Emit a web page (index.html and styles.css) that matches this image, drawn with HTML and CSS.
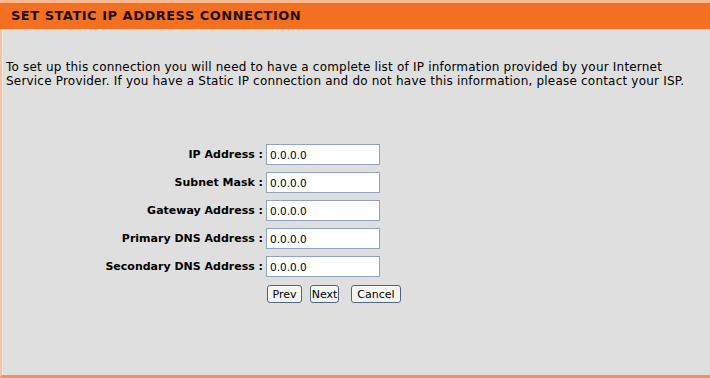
FILE: index.html
```html
<!DOCTYPE html>
<html lang="en">
<head>
    <meta charset="UTF-8">
    <title>Set Static IP Address Connection</title>
    <link rel="stylesheet" href="styles.css">
</head>
<body>
    <div class="box">
        <h2 class="box-title">SET STATIC IP ADDRESS CONNECTION</h2>
        <div class="box-body">
            <p class="intro">To set up this connection you will need to have a complete list of IP information provided by your Internet<br>Service Provider. If you have a Static IP connection and do not have this information, please contact your ISP.</p>
            <div class="ip-form">
                <label class="ip-label">IP Address :</label>
                <input class="ip-input" type="text" value="0.0.0.0">
                <label class="ip-label">Subnet Mask :</label>
                <input class="ip-input" type="text" value="0.0.0.0">
                <label class="ip-label">Gateway Address :</label>
                <input class="ip-input" type="text" value="0.0.0.0">
                <label class="ip-label">Primary DNS Address :</label>
                <input class="ip-input" type="text" value="0.0.0.0">
                <label class="ip-label">Secondary DNS Address :</label>
                <input class="ip-input" type="text" value="0.0.0.0">
                <span></span>
                <div class="btn-row">
                    <button class="btn btn-prev">Prev</button>
                    <button class="btn btn-next">Next</button>
                    <button class="btn btn-cancel">Cancel</button>
                </div>
            </div>
        </div>
    </div>
</body>
</html>
```

FILE: styles.css
```css
html, body {
    margin: 0;
    padding: 0;
    background: #dfdfdf;
    font-family: "DejaVu Sans", Verdana, sans-serif;
}
.box {
    height: 378px;
    display: flex;
    flex-direction: column;
    border-top: 3px solid #f9b991;
    box-sizing: border-box;
}
.box-title {
    margin: 0;
    height: 26px;
    line-height: 26px;
    padding-left: 11px;
    background: #f37021;
    color: #1c0c02;
    font-size: 13px;
    letter-spacing: 0.5px;
    font-weight: bold;
}
/* Content area with the peach left edge */
.box-body {
    flex: 1;
    padding: 0 0 0 4px;
    border-left: 2px solid #f6c3a4;
    border-bottom: 3px solid #f3915c;
    box-shadow: inset 1px 0 0 #efe7e2;
    background: #dfdfdf;
}
.intro {
    margin: 0;
    padding-top: 31px;
    font-size: 12px;
    letter-spacing: 0.2px;
    line-height: 14px;
    white-space: nowrap;
    color: #000;
}
.ip-form {
    margin-top: 56px;
    display: grid;
    grid-template-columns: 257px auto;
    column-gap: 3px;
    row-gap: 7px;
    align-items: center;
    justify-content: start;
}
.ip-label {
    text-align: right;
    font-size: 11px;
    font-weight: bold;
    color: #000;
}
.ip-input {
    width: 114px;
    height: 21px;
    box-sizing: border-box;
    margin: 0;
    padding: 0 3px;
    border: 1px solid #90a4bf;
    background: #fff;
    font-family: "DejaVu Sans", Verdana, sans-serif;
    font-size: 10.5px;
    color: #000;
}
.btn-row {
    display: flex;
    margin-top: 1px;
    margin-left: 1px;
}
.btn {
    height: 18px;
    padding: 0;
    border: 1px solid #4a6585;
    border-radius: 3px;
    background: #f5f5f2;
    font-family: "DejaVu Sans", Verdana, sans-serif;
    font-size: 11px;
    color: #000;
}
.btn-prev { width: 35px; }
.btn-next { width: 29px; margin-left: 8px; }
.btn-cancel { width: 50px; margin-left: 12px; }
```
